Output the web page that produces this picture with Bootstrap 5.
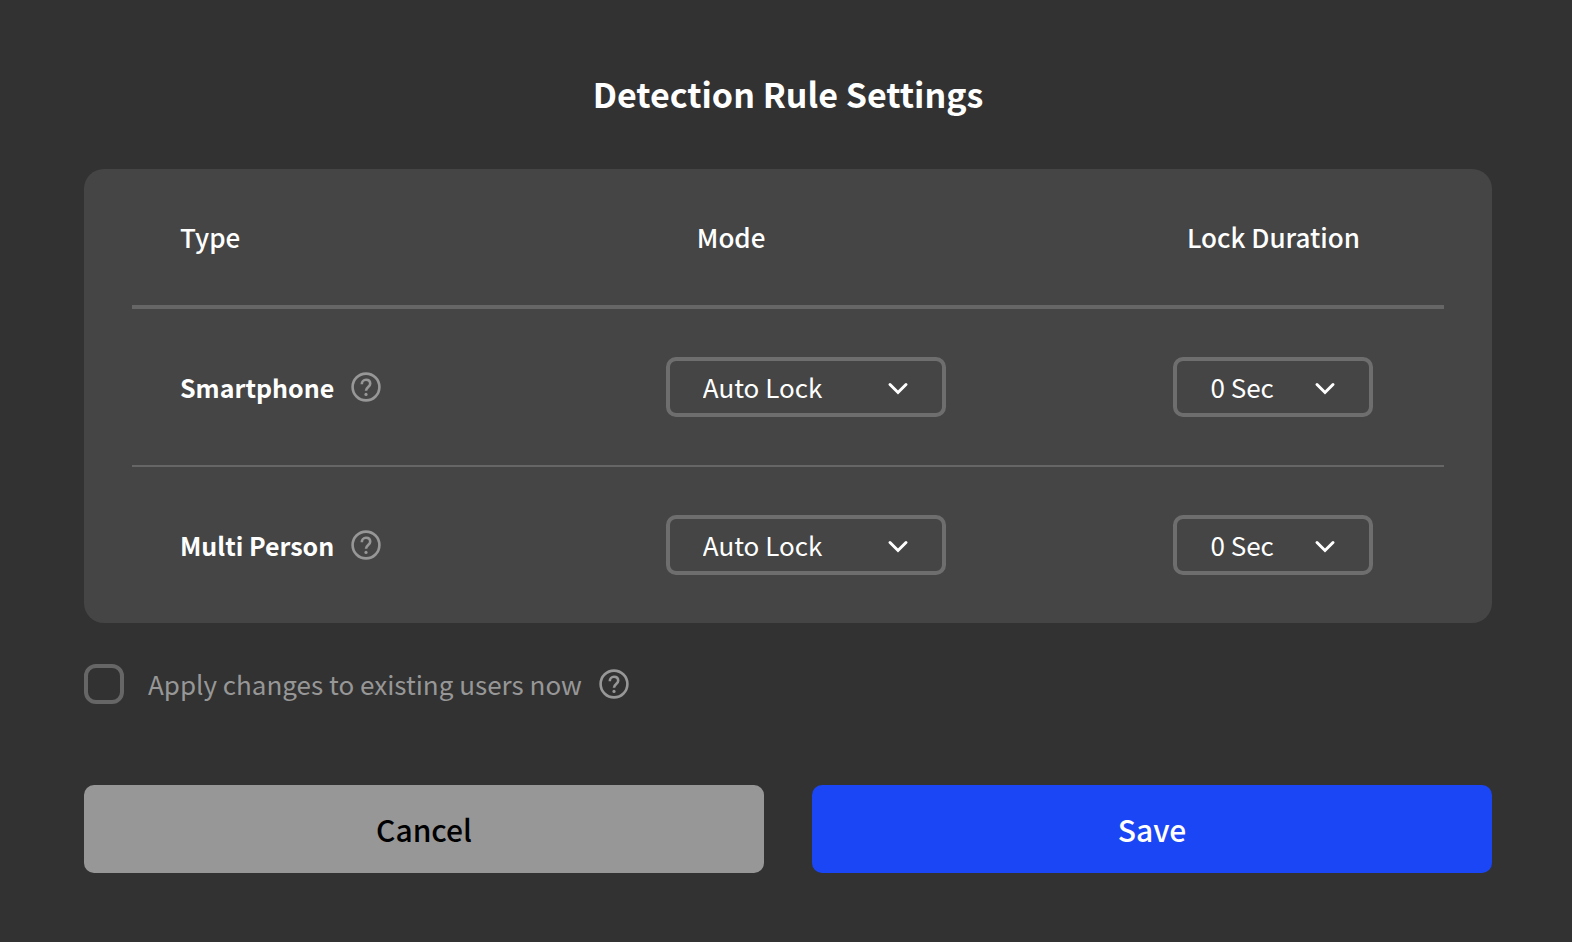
<!DOCTYPE html>
<html lang="en">
<head>
<meta charset="utf-8">
<meta name="viewport" content="width=device-width, initial-scale=1">
<title>Detection Rule Settings</title>
<link rel="stylesheet" href="https://cdn.jsdelivr.net/npm/bootstrap@5.3.0/dist/css/bootstrap.min.css">
<style>
  body {
    background: #323232;
    color: #fff;
    font-family: "Noto Sans CJK KR", "Noto Sans", sans-serif;
    font-size: 26px;
    line-height: 40px;
  }
  .settings { padding: 64px 80px 64px 84px; }
  .settings-title { font-size: 34px; font-weight: 700; line-height: 60px; margin-bottom: 45px; }
  .rule-panel { background: #454545; border-radius: 20px; padding: 0 48px; }
  .rule-table { table-layout: fixed; }
  .rule-table th, .rule-table td { padding: 48px 0; vertical-align: middle; }
  .rule-table thead th { font-weight: 500; border-bottom: 4px solid #666; }
  .rule-table tbody th { font-size: 25px; font-weight: 700; }
  .rule-table tbody tr + tr > * { border-top: 2px solid #666; }
  .rule-table .type-col { width: 40%; padding-left: 48px; }
  .rule-table .mode-col { padding-left: 9px; }
  .rule-table thead .mode-col { padding-left: 40px; }
  .rule-table .time-col { width: 26%; }
  .rule-select {
    width: 280px;
    height: 60px;
    padding: 0 64px 0 33px;
    border: 4px solid #6e6e6e;
    border-radius: 10px;
    color: #fff;
    font-size: 26px;
    font-weight: 400;
    line-height: 52px;
    background: url("data:image/svg+xml,%3Csvg xmlns='http://www.w3.org/2000/svg' viewBox='0 0 24 24'%3E%3Cpath d='M4 9.5l8 8 8-8' fill='none' stroke='%23fff' stroke-width='3' stroke-linecap='round' stroke-linejoin='miter'/%3E%3C/svg%3E") no-repeat right 32px center / 24px 24px;
  }
  .rule-select.short { width: 200px; }
  .rule-select option { background: #454545; }
  .help-btn { color: #979797; line-height: 0; }
  .help-btn svg { width: 32px; height: 32px; }
  .apply-row { margin-top: 41px; color: #979797; font-weight: 400; }
  .apply-row .form-check-input {
    width: 40px;
    height: 40px;
    border: 4px solid #666;
    border-radius: 12px;
    background-color: transparent;
  }
  .apply-row label { margin-left: 24px; }
  .actions { gap: 48px; margin-top: 81px; }
  .action-btn { height: 88px; border: 0; border-radius: 10px; font-size: 30px; font-weight: 500; }
  .action-btn.cancel, .action-btn.cancel:hover { background: #979797; color: #000; }
  .action-btn.save, .action-btn.save:hover { background: #1b46f5; color: #fff; }
</style>
</head>
<body>
<svg class="d-none" aria-hidden="true">
  <symbol id="help" viewBox="0 0 32 32">
    <g fill="none" stroke="currentColor">
      <circle cx="16" cy="16" r="13.4" stroke-width="2.6"/>
      <path d="M11.8 13.2c0-2.6 1.7-4.4 4.2-4.4s4.2 1.6 4.2 4c0 3.2-4.2 3.4-4.2 7" stroke-width="2.6" stroke-linecap="butt"/>
    </g>
    <circle cx="16" cy="23.4" r="1.6" fill="currentColor"/>
  </symbol>
</svg>
<main class="settings">
  <h1 class="settings-title text-center">Detection Rule Settings</h1>
  <form>
    <div class="rule-panel">
      <table class="rule-table w-100">
        <thead>
          <tr>
            <th scope="col" class="type-col">Type</th>
            <th scope="col" class="mode-col">Mode</th>
            <th scope="col" class="time-col text-center">Lock Duration</th>
          </tr>
        </thead>
        <tbody>
          <tr>
            <th scope="row" class="type-col">
              <div class="d-flex align-items-center gap-3">Smartphone
                <button type="button" class="btn p-0 border-0 help-btn" aria-label="About smartphone detection"><svg aria-hidden="true"><use href="#help"/></svg></button>
              </div>
            </th>
            <td class="mode-col"><select class="form-select rule-select" aria-label="Smartphone mode"><option>Auto Lock</option></select></td>
            <td class="time-col"><select class="form-select rule-select short mx-auto" aria-label="Smartphone lock duration"><option>0 Sec</option></select></td>
          </tr>
          <tr>
            <th scope="row" class="type-col">
              <div class="d-flex align-items-center gap-3">Multi Person
                <button type="button" class="btn p-0 border-0 help-btn" aria-label="About multi person detection"><svg aria-hidden="true"><use href="#help"/></svg></button>
              </div>
            </th>
            <td class="mode-col"><select class="form-select rule-select" aria-label="Multi person mode"><option>Auto Lock</option></select></td>
            <td class="time-col"><select class="form-select rule-select short mx-auto" aria-label="Multi person lock duration"><option>0 Sec</option></select></td>
          </tr>
        </tbody>
      </table>
    </div>
    <div class="apply-row d-flex align-items-center">
      <input class="form-check-input m-0" type="checkbox" id="apply-now">
      <label for="apply-now">Apply changes to existing users now</label>
      <button type="button" class="btn p-0 border-0 help-btn ms-3" aria-label="About applying changes"><svg aria-hidden="true"><use href="#help"/></svg></button>
    </div>
    <div class="actions d-flex">
      <button type="button" class="btn action-btn cancel flex-fill w-50">Cancel</button>
      <button type="submit" class="btn action-btn save flex-fill w-50">Save</button>
    </div>
  </form>
</main>
<script src="https://cdn.jsdelivr.net/npm/bootstrap@5.3.0/dist/js/bootstrap.bundle.min.js"></script>
</body>
</html>
